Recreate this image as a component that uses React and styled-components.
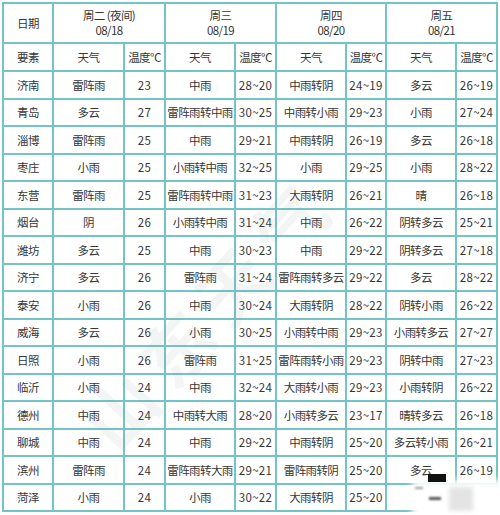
import React from "react";
import styled, { createGlobalStyle } from "styled-components";

const Global = createGlobalStyle`
  html, body { margin: 0; padding: 0; background: #fff; }
  body { font-family: "Noto Sans CJK SC", "Noto Sans", sans-serif; }
`;

const Page = styled.div`
  position: relative;
  width: 500px;
  height: 515px;
  padding: 2px 0 0 2px;
  box-sizing: border-box;
  overflow: hidden;
`;

const Grid = styled.div`
  display: grid;
  grid-template-columns: 48px 69px 39px 68px 39px 68px 38px 68px 39px;
  grid-template-rows: 38px 26px repeat(8, 26px 25px);
  gap: 2px;
  padding: 2px;
  width: max-content;
  background: #72c4c9;
`;

const Cell = styled.div`
  background: #fff;
  display: flex;
  flex-direction: column;
  align-items: center;
  justify-content: center;
  color: #363636;
  font-size: 11.5px;
  line-height: 15px;
  white-space: nowrap;
  letter-spacing: ${(p) => (p.$num ? "0.3px" : "-0.6px")};
  grid-column: ${(p) => (p.$span ? `span ${p.$span}` : "auto")};
`;

const Watermark = styled.div`
  position: absolute;
  left: 95px;
  top: 400px;
  transform: rotate(-48deg);
  transform-origin: left center;
  font-size: 70px;
  line-height: 1;
  font-weight: 700;
  letter-spacing: 14px;
  color: #8f9aa0;
  opacity: 0.1;
  pointer-events: none;
  white-space: nowrap;
`;

const Blur = styled.div`
  position: absolute;
  left: 412px;
  top: 480px;
  width: 95px;
  height: 40px;
  background: #fff;
  filter: blur(3px);
  pointer-events: none;
`;

const Mark = styled.div`
  position: absolute;
  left: ${(p) => p.$x}px;
  top: ${(p) => p.$y}px;
  width: ${(p) => p.$w}px;
  height: ${(p) => p.$h}px;
  background: ${(p) => p.$c};
  filter: blur(${(p) => p.$b}px);
  pointer-events: none;
`;

const days = [
  ["周二 (夜间)", "08/18"],
  ["周三", "08/19"],
  ["周四", "08/20"],
  ["周五", "08/21"],
];

const rows = [
  ["济南", "雷阵雨", "23", "中雨", "28~20", "中雨转阴", "24~19", "多云", "26~19"],
  ["青岛", "多云", "27", "雷阵雨转中雨", "30~25", "中雨转小雨", "29~23", "小雨", "27~24"],
  ["淄博", "雷阵雨", "25", "中雨", "29~21", "中雨转阴", "26~19", "多云", "26~18"],
  ["枣庄", "小雨", "25", "小雨转中雨", "32~25", "小雨", "29~25", "小雨", "28~22"],
  ["东营", "雷阵雨", "25", "雷阵雨转中雨", "31~23", "大雨转阴", "26~21", "晴", "26~18"],
  ["烟台", "阴", "26", "小雨转中雨", "31~24", "中雨", "26~22", "阴转多云", "25~21"],
  ["潍坊", "多云", "25", "中雨", "30~23", "中雨", "29~22", "阴转多云", "27~18"],
  ["济宁", "多云", "26", "雷阵雨", "31~24", "雷阵雨转多云", "29~22", "多云", "28~22"],
  ["泰安", "小雨", "26", "中雨", "30~24", "大雨转阴", "28~22", "阴转小雨", "26~22"],
  ["威海", "多云", "26", "小雨", "30~25", "小雨转中雨", "29~23", "小雨转多云", "27~27"],
  ["日照", "小雨", "26", "雷阵雨", "31~25", "雷阵雨转小雨", "29~23", "阴转中雨", "27~23"],
  ["临沂", "小雨", "24", "中雨", "32~24", "大雨转小雨", "29~23", "小雨转阴", "26~22"],
  ["德州", "中雨", "24", "中雨转大雨", "28~20", "小雨转多云", "23~17", "晴转多云", "26~18"],
  ["聊城", "中雨", "24", "中雨", "29~22", "中雨转阴", "25~20", "多云转小雨", "26~21"],
  ["滨州", "雷阵雨", "24", "雷阵雨转大雨", "29~21", "雷阵雨转阴", "25~20", "多云", "26~19"],
  ["菏泽", "小雨", "24", "小雨", "30~22", "大雨转阴", "25~20", "", ""],
];

const isNum = (s) => /^[0-9~]+$/.test(s);

export default function App() {
  return (
    <>
      <Global />
      <Page>
        <Grid>
          <Cell>日期</Cell>
          {days.map(([d, t]) => (
            <Cell key={d} $span={2}>
              <span>{d}</span>
              <span>{t}</span>
            </Cell>
          ))}
          <Cell>要素</Cell>
          {days.map((d) => (
            <React.Fragment key={d[0] + "h"}>
              <Cell>天气</Cell>
              <Cell>温度℃</Cell>
            </React.Fragment>
          ))}
          {rows.map((r) =>
            r.map((v, i) => (
              <Cell key={r[0] + i} $num={isNum(v)}>
                {v}
              </Cell>
            ))
          )}
        </Grid>
        <Watermark>山东天气</Watermark>
        <Blur />
        <Mark $x={428} $y={474} $w={18} $h={8} $c="#111" $b={0.6} />
        <Mark $x={449} $y={487} $w={24} $h={24} $c="#e4e4e4" $b={2} />
        <Mark $x={429} $y={497} $w={12} $h={3} $c="#555" $b={0.8} />
        <Mark $x={415} $y={487} $w={8} $h={2} $c="#999" $b={0.8} />
      </Page>
    </>
  );
}
